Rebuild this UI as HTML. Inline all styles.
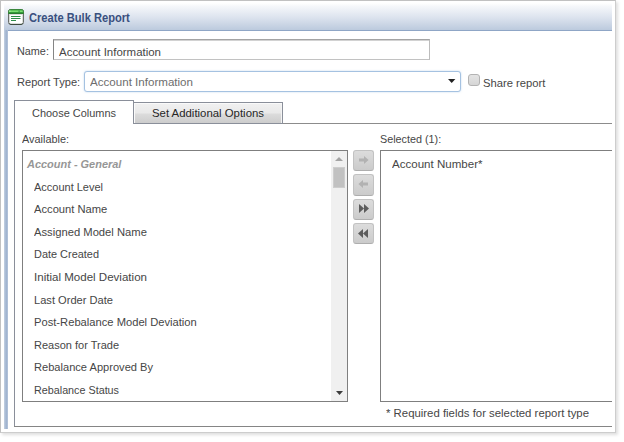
<!DOCTYPE html>
<html><head><meta charset="utf-8"><title>Create Bulk Report</title>
<style>
html,body{margin:0;padding:0;background:#fff;}
body{width:624px;height:442px;position:relative;overflow:hidden;font-family:"Liberation Sans",sans-serif;font-size:11.5px;color:#464646;}
.abs,.b{position:absolute;box-sizing:border-box;}
.t{position:absolute;white-space:nowrap;line-height:16px;height:16px;transform-origin:0 50%;}
#frame{left:0;top:0;width:616px;height:433px;border:1px solid #c1c1c1;border-right-color:#cdcdcd;border-bottom-color:#cdcdcd;background:#fff;box-shadow:2px 2px 3px rgba(0,0,0,.13);}
#title{left:4px;top:3px;width:608px;height:28px;background:linear-gradient(#ffffff 0%,#f5f7fa 12%,#dce3ee 52%,#bdcbde 95%,#8fa6c6 97%,#8fa6c6 100%);}
#lbar{left:4px;top:30px;width:4px;height:399px;background:linear-gradient(90deg,#c5d1e2,#a9bbd4 40%,#9db1ce 75%,#c2cee0);}
#content{left:8px;top:31px;width:607px;height:400px;background:#fff;border-top-left-radius:2px;}
#nameinp{left:53px;top:39px;width:377px;height:21px;border:1px solid #c2c2c2;border-top-color:#a4a4a4;border-left-color:#858585;border-right-color:#bcbcbc;background:#fff;box-shadow:inset 0 1px 0 #d2d2d2;}
#select{left:84px;top:71px;width:377px;height:21px;border:1px solid #a5c2e1;border-radius:3px;background:#fff;box-shadow:0 0 2px rgba(140,180,225,.55);}
#cb{left:468px;top:74px;width:12px;height:12px;border:1px solid #b3b3b3;border-radius:3px;background:linear-gradient(#e4e4e4,#d6d6d6);}
.ln{position:absolute;background:#8a8f9a;}
#tab2bg{left:134px;top:102px;width:149px;height:22px;border:1px solid #8a8f9a;border-left:none;border-bottom:none;background:linear-gradient(#f1f1f1 0%,#e9e9e9 48%,#dcdcdc 52%,#cbcbcb 100%);box-shadow:inset 0 1px 0 #fafafa,inset 1px 0 0 #fafafa,inset -1px 0 0 #f4f4f4;}
.lb{border:1px solid #7f7f7f;background:#fff;}
.btn{left:353px;width:21px;height:21.4px;border:1px solid #c2c2c2;border-bottom-color:#aeaeae;border-radius:3px;background:linear-gradient(#dcdcdc,#cbcbcb);}
</style></head><body>
<div id="frame" class="abs"></div>
<div id="title" class="abs"></div>
<div id="lbar" class="abs"></div>
<div id="content" class="abs"></div>

<!-- title icon -->
<svg class="abs" style="left:8px;top:9px" width="16" height="16" viewBox="0 0 16 16">
<rect x="0.5" y="0.5" width="15" height="15" rx="2.2" fill="#fff" stroke="#6a6e6a"/>
<rect x="1.5" y="5.5" width="13" height="9" fill="#fff" stroke="#d9ddd9"/>
<path d="M0.5 4.5V2.7Q0.5 0.5 2.7 0.5H13.3Q15.5 0.5 15.5 2.7V4.5Z" fill="#36a23a" stroke="#3a873c"/>
<rect x="1.3" y="1.5" width="13.4" height="1.4" fill="#86e57c"/>
<rect x="1.3" y="1.6" width="1" height="1" fill="#e8ffe0"/>
<rect x="10.5" y="1.6" width="1.2" height="1.2" fill="#2b7f4a"/>
<rect x="0.5" y="3.9" width="15" height="1" fill="#2a7a30"/>
<path d="M1.2 14.2Q2 15.5 3 15.5H13Q14 15.5 14.8 14.2" fill="none" stroke="#3c4a3e"/>
<rect x="3" y="7" width="9.5" height="1" fill="#2d8c48"/>
<rect x="3" y="9" width="9.5" height="1" fill="#2d8c48"/>
<rect x="3" y="11" width="5" height="1" fill="#2d8c48"/>
</svg>

<div id="nameinp" class="b"></div>
<div id="select" class="b"></div>
<svg class="abs" style="left:448.3px;top:79px" width="7.4" height="4" viewBox="0 0 7 4" preserveAspectRatio="none"><path d="M0 0H7L3.5 4Z" fill="#222"/></svg>
<div id="cb" class="b"></div>

<!-- tab strip -->
<div class="ln" style="left:14px;top:100px;width:120px;height:1px"></div>
<div class="ln" style="left:14px;top:100px;width:1px;height:327px"></div>
<div class="ln" style="left:133px;top:100px;width:1px;height:24px"></div>
<div id="tab2bg" class="b"></div>
<div class="ln" style="left:134px;top:123px;width:149px;height:1px"></div><div class="ln" style="left:283px;top:123px;width:329px;height:1px;background:#8c8c8c"></div>
<div class="ln" style="left:14px;top:426px;width:598px;height:1px;background:#858585"></div>

<!-- list boxes -->
<div class="b lb" style="left:22px;top:150px;width:326px;height:252px"></div>
<div class="b" style="left:331px;top:151px;width:16px;height:250px;background:#f0f0f0"></div>
<svg class="abs" style="left:335px;top:157px" width="8" height="4" viewBox="0 0 8 4"><path d="M0 4H8L4 0Z" fill="#a3a3a3"/></svg>
<div class="b" style="left:333px;top:167px;width:12px;height:21px;background:#c1c1c1;border:1px solid #cdcdcd"></div>
<svg class="abs" style="left:335.5px;top:391px" width="7" height="4" viewBox="0 0 7 4"><path d="M0 0H7L3.5 4Z" fill="#3c3c3c"/></svg>
<div class="b lb" style="left:380px;top:150px;width:240px;height:252px;border-right:none;clip-path:inset(0 8px 0 0)"></div>

<!-- buttons -->
<div class="b btn" style="top:150px"></div>
<div class="b btn" style="top:174.2px"></div>
<div class="b btn" style="top:198.6px"></div>
<div class="b btn" style="top:223px"></div>
<svg class="abs" style="left:359px;top:156px" width="10" height="8" viewBox="0 0 10 8"><path d="M0 2.5H5V0L9.6 4L5 8V5.5H0Z" fill="#b2b2b2"/></svg>
<svg class="abs" style="left:358.2px;top:180.3px" width="10" height="8" viewBox="0 0 10 8"><path d="M10 2.5H5V0L0.4 4L5 8V5.5H10Z" fill="#b2b2b2"/></svg>
<svg class="abs" style="left:358.8px;top:204.3px" width="10" height="9" viewBox="0 0 10 9"><path d="M0 0L5 4.5L0 9ZM5 0L10 4.5L5 9Z" fill="#5c5c5c"/></svg>
<svg class="abs" style="left:358.2px;top:228.8px" width="10" height="9" viewBox="0 0 10 9"><path d="M10 0L5 4.5L10 9ZM5 0L0 4.5L5 9Z" fill="#5c5c5c"/></svg>

<span class="t" id="ttl" style="left:29.00px;top:9.84px;transform:scaleX(0.9273);font-size:12px;font-weight:bold;color:#39507f;">Create Bulk Report</span>
<span class="t" id="name" style="left:16.50px;top:43.02px;transform:scaleX(0.9417);">Name:</span>
<span class="t" id="nameval" style="left:58.75px;top:44.02px;transform:scaleX(0.9973);">Account Information</span>
<span class="t" id="rt" style="left:16.50px;top:74.02px;transform:scaleX(0.9628);">Report Type:</span>
<span class="t" id="rtval" style="left:90.00px;top:74.02px;transform:scaleX(1.0070);color:#6d6d6d;">Account Information</span>
<span class="t" id="share" style="left:483.25px;top:75.02px;transform:scaleX(0.9775);">Share report</span>
<span class="t" id="tab1" style="left:32.25px;top:105.02px;transform:scaleX(0.9522);">Choose Columns</span>
<span class="t" id="tab2" style="left:151.70px;top:105.02px;transform:scaleX(0.9896);color:#262626;">Set Additional Options</span>
<span class="t" id="avail" style="left:21.50px;top:131.02px;transform:scaleX(0.9465);">Available:</span>
<span class="t" id="sel" style="left:380.25px;top:131.02px;transform:scaleX(0.9386);">Selected (1):</span>
<span class="t" id="grp" style="left:27.40px;top:156.02px;transform:scaleX(0.9529);font-weight:bold;font-style:italic;color:#969696;">Account - General</span>
<span class="t" id="i1" style="left:34.30px;top:179.02px;transform:scaleX(0.9550);">Account Level</span>
<span class="t" id="i2" style="left:34.30px;top:201.02px;transform:scaleX(0.9717);">Account Name</span>
<span class="t" id="i3" style="left:34.30px;top:224.02px;transform:scaleX(0.9758);">Assigned Model Name</span>
<span class="t" id="i4" style="left:33.80px;top:246.02px;transform:scaleX(0.9502);">Date Created</span>
<span class="t" id="i5" style="left:33.80px;top:269.02px;transform:scaleX(1.0043);">Initial Model Deviation</span>
<span class="t" id="i6" style="left:33.80px;top:292.02px;transform:scaleX(0.9654);">Last Order Date</span>
<span class="t" id="i7" style="left:33.80px;top:314.02px;transform:scaleX(0.9720);">Post-Rebalance Model Deviation</span>
<span class="t" id="i8" style="left:33.80px;top:337.02px;transform:scaleX(0.9566);">Reason for Trade</span>
<span class="t" id="i9" style="left:33.80px;top:359.02px;transform:scaleX(0.9644);">Rebalance Approved By</span>
<span class="t" id="i10" style="left:33.80px;top:382.02px;transform:scaleX(0.9362);">Rebalance Status</span>
<span class="t" id="accnum" style="left:391.80px;top:156.02px;transform:scaleX(1.0042);">Account Number*</span>
<span class="t" id="req" style="left:386.40px;top:405.22px;transform:scaleX(0.9893);">* Required fields for selected report type</span>
</body></html>
